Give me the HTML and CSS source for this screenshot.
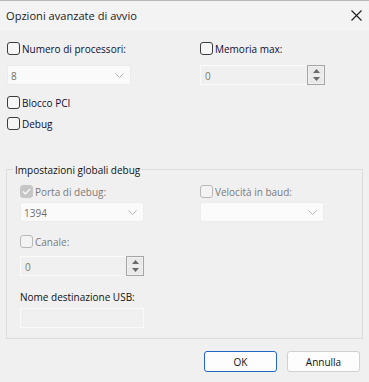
FILE: index.html
```html
<!DOCTYPE html>
<html lang="it">
<head>
<meta charset="utf-8">
<title>Opzioni avanzate di avvio</title>
<link rel="stylesheet" href="styles.css">
</head>
<body>
<div class="window">
  <div class="titlebar">
    <span class="title">Opzioni avanzate di avvio</span>
    <svg class="close" width="11" height="11" viewBox="0 0 11 11"><path d="M0.5 0.5 L10.5 10.5 M10.5 0.5 L0.5 10.5" stroke="#1b1b1b" stroke-width="1.1" fill="none"/></svg>
  </div>
  <div class="content">
    <div class="cols">
      <div class="col">
        <div class="cb-row"><span class="cb"></span><span class="lbl">Numero di processori:</span></div>
        <div class="combo c-top"><span class="val">8</span><svg class="chev" width="9" height="5" viewBox="0 0 9 5"><path d="M0.5 0.5 L4.5 4.5 L8.5 0.5" stroke="#b4b4b4" fill="none"/></svg></div>
        <div class="cb-row r-pci"><span class="cb"></span><span class="lbl">Blocco PCI</span></div>
        <div class="cb-row r-debug"><span class="cb"></span><span class="lbl">Debug</span></div>
      </div>
      <div class="col">
        <div class="cb-row"><span class="cb"></span><span class="lbl">Memoria max:</span></div>
        <div class="spin s-top">
          <div class="spin-field"><span class="val num">0</span></div>
          <div class="spin-btns">
            <div class="sb"><svg width="7" height="4" viewBox="0 0 7 4"><path d="M0 4 L3.5 0 L7 4 Z" fill="#6a6a6a"/></svg></div>
            <div class="sb"><svg width="7" height="4" viewBox="0 0 7 4"><path d="M0 0 L3.5 4 L7 0 Z" fill="#6a6a6a"/></svg></div>
          </div>
        </div>
      </div>
    </div>

    <fieldset class="group">
      <legend>Impostazioni globali debug</legend>
      <div class="gcols">
        <div class="gcol">
          <div class="cb-row dis"><span class="cb checked"><svg width="9" height="7" viewBox="0 0 9 7"><path d="M1 3.5 L3.5 6 L8 1" stroke="#fff" stroke-width="1.2" fill="none"/></svg></span><span class="lbl">Porta di debug:</span></div>
          <div class="combo c-port"><span class="val">1394</span><svg class="chev" width="9" height="5" viewBox="0 0 9 5"><path d="M0.5 0.5 L4.5 4.5 L8.5 0.5" stroke="#b4b4b4" fill="none"/></svg></div>
          <div class="cb-row dis r-canale"><span class="cb"></span><span class="lbl">Canale:</span></div>
          <div class="spin s-canale">
            <div class="spin-field"><span class="val">0</span></div>
            <div class="spin-btns">
              <div class="sb"><svg width="7" height="4" viewBox="0 0 7 4"><path d="M0 4 L3.5 0 L7 4 Z" fill="#6a6a6a"/></svg></div>
              <div class="sb"><svg width="7" height="4" viewBox="0 0 7 4"><path d="M0 0 L3.5 4 L7 0 Z" fill="#6a6a6a"/></svg></div>
            </div>
          </div>
          <div class="usb-label">Nome destinazione USB:</div>
          <div class="textbox"></div>
        </div>
        <div class="gcol">
          <div class="cb-row dis"><span class="cb"></span><span class="lbl">Velocità in baud:</span></div>
          <div class="combo c-port white"><span class="val"></span><svg class="chev" width="9" height="5" viewBox="0 0 9 5"><path d="M0.5 0.5 L4.5 4.5 L8.5 0.5" stroke="#b4b4b4" fill="none"/></svg></div>
        </div>
      </div>
    </fieldset>
  </div>
  <div class="buttons">
    <button class="btn primary">OK</button>
    <button class="btn">Annulla</button>
  </div>
</div>
</body>
</html>
```

FILE: styles.css
```css
* { box-sizing: border-box; }
html, body { margin: 0; padding: 0; }
body {
  width: 369px;
  height: 382px;
  background: #f0f0f0;
  font-family: "Open Sans", "Noto Sans", Arial, sans-serif;
  font-size: 10px;
  color: #111;
  overflow: hidden;
}
.window { width: 369px; height: 382px; }

.titlebar {
  height: 31px;
  background: #f3f3f3;
  border-top: 1px solid #b9b9b9;
  display: flex;
  align-items: center;
  justify-content: space-between;
  padding: 0 6px 0 6px;
}
.title { color: #1b1b1b; margin-top: -1px; font-size: 11.1px; }
.close { margin-right: 1px; margin-top: -2px; }

.content { padding: 10px 0 0 7px; }

.cols { display: grid; grid-template-columns: 193px 1fr; }
.col { display: flex; flex-direction: column; align-items: flex-start; }

.cb-row { display: flex; align-items: flex-start; height: 15px; line-height: 15px; }
.cb {
  width: 13px; height: 13px;
  margin-top: 1px;
  margin-right: 2px;
  border: 1px solid #3c3c3c;
  border-radius: 3px;
  background: #f6f6f6;
  display: flex; align-items: center; justify-content: center;
  flex: none;
}
.lbl { color: #0e0e34; padding-top: 1px; }
.dis .cb { border-color: #b8b8b8; background: #f3f3f3; }
.dis .lbl { color: #7a7a7a; }
.dis .cb.checked { background: #c6c6c6; border-color: #c6c6c6; }

.combo {
  width: 124px; height: 20px;
  background: #fafafa;
  border: 1px solid #ececec;
  border-radius: 2px;
  display: flex; align-items: center; justify-content: space-between;
  padding: 1px 6px 0 3px;
}
.combo .val { color: #6d6d6d; }
.combo.white { background: #fbfbfb; }
.c-top { margin-top: 9px; }
.c-port { margin-top: 3px; }

.r-pci { margin-top: 10px; }
.r-debug { margin-top: 6px; }

.spin { display: flex; width: 125px; height: 20px; }
.s-top { margin-top: 9px; }
.spin-field {
  flex: 1;
  border: 1px solid #fbfbfb;
  border-right: none;
  background: #f0f0f0;
  display: flex; align-items: center;
  padding: 1px 0 0 4px;
}
.spin-field .val { color: #7a7a6a; }
.spin-btns {
  width: 18px;
  border: 1px solid #a5a5a5;
  display: flex; flex-direction: column;
  background: #f0f0f0;
  padding: 1px;
  gap: 1px;
}
.sb {
  flex: 1;
  background: #e9e9e9;
  display: flex; align-items: center; justify-content: center;
}

.group {
  margin: 31px 0 0 -1px;
  width: 357px;
  border: 1px solid #dcdcdc;
  padding: 7px 0 10px 13px;
  min-width: 0;
}
.group legend {
  padding: 1px 2px 0 2px;
  margin-left: -7px;
  line-height: 14px;
  height: 15px;
  color: #111;
}
.gcols { display: grid; grid-template-columns: 180px 1fr; }
.gcol { display: flex; flex-direction: column; align-items: flex-start; }

.r-canale { margin-top: 12px; }
.s-canale { margin-top: 7px; width: 124px; }
.usb-label { margin-top: 13px; height: 15px; line-height: 15px; padding-top: 1px; color: #111; }
.textbox {
  margin-top: 4px;
  width: 124px; height: 20px;
  border: 1px solid #fafafa;
  background: #f0f0f0;
}

.buttons {
  display: flex;
  justify-content: flex-end;
  gap: 10px;
  padding-right: 9px;
  margin-top: 12px;
}
.btn {
  width: 73px; height: 21px;
  font-family: inherit; font-size: 10px;
  color: #111;
  background: #fdfdfd;
  border: 1px solid #d0d0d0;
  border-radius: 3px;
  padding: 0;
}
.btn.primary { border-color: #2266c4; }
```
